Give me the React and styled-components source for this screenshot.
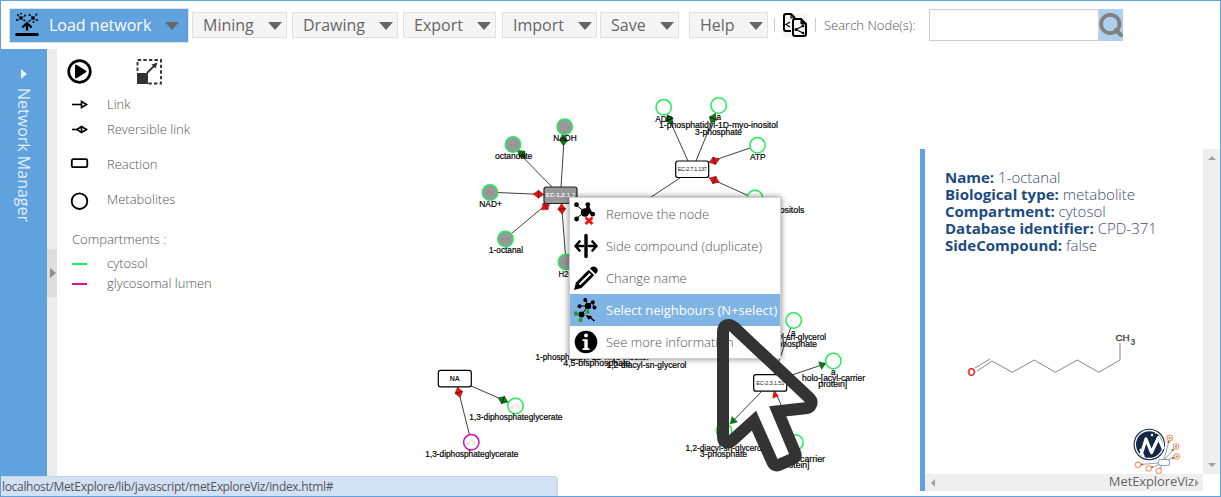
import React from "react";
import styled, { createGlobalStyle } from "styled-components";

const BLUE = "#5fa2dd";
const GREEN = "#22ec5a";
const MAGENTA = "#d40eb0";

const Global = createGlobalStyle`
  * { box-sizing: border-box; }
  html, body { margin: 0; padding: 0; background: #fff; }
  body { font-family: "Open Sans", "Noto Sans", sans-serif; overflow: hidden; }
`;

const Frame = styled.div`
  position: relative;
  width: 1221px;
  height: 497px;
  border: 1px solid ${BLUE};
  background: #fff;
  display: flex;
  flex-direction: column;
  overflow: hidden;
`;

const Toolbar = styled.div`
  display: flex;
  align-items: center;
  height: 48px;
  flex: none;
  padding-left: 8px;
`;

const ToolButton = styled.div`
  display: flex;
  align-items: center;
  justify-content: space-between;
  width: ${(p) => p.$w}px;
  height: ${(p) => (p.$primary ? 35 : 26)}px;
  margin-right: ${(p) => p.$gap}px;
  padding: 0 ${(p) => (p.$primary ? 9 : 4)}px 0 ${(p) => (p.$primary ? 5 : 10)}px;
  border: 1px solid #e1e1e1;
  background: ${(p) => (p.$primary ? BLUE : "#f5f5f5")};
  color: ${(p) => (p.$primary ? "#fff" : "#666")};
  font-size: 16px;
  line-height: 24px;
  white-space: nowrap;
`;

const ButtonText = styled.span`
  flex: 1;
  margin-left: ${(p) => p.$left || 0}px;
`;

const Caret = styled.span`
  width: 0;
  height: 0;
  margin-top: 2px;
  border: 7px solid transparent;
  border-top: 8px solid #666;
  border-bottom: 0;
`;

const Separator = styled.span`
  width: 1px;
  height: 14px;
  background: #ccc;
  margin: 0 ${(p) => p.$right}px 0 ${(p) => p.$left}px;
`;

const SearchLabel = styled.label`
  width: 105px;
  font-size: 13px;
  font-weight: 300;
  color: #555;
  white-space: nowrap;
`;

const SearchInput = styled.input`
  width: 170px;
  height: 32px;
  border: 1px solid #cfcfcf;
  outline: none;
  background: #fff;
  padding: 0 8px;
`;

const SearchButton = styled.div`
  width: 24px;
  height: 32px;
  background: #aed0ee;
  display: flex;
  align-items: center;
`;

const Body = styled.div`
  display: flex;
  flex: 1;
  min-height: 0;
`;

const SideTab = styled.div`
  width: 46px;
  background: ${BLUE};
  color: #e4effa;
  display: flex;
  flex-direction: column;
  align-items: center;
  padding-top: 20px;
`;

const SideTabArrow = styled.span`
  border: 5px solid transparent;
  border-left: 6px solid #e4effa;
  border-right: 0;
`;

const SideTabText = styled.span`
  writing-mode: vertical-rl;
  margin-top: 9px;
  font-size: 16px;
  line-height: 22px;
  white-space: nowrap;
`;

const Splitter = styled.div`
  width: 10px;
  background: #ececec;
  padding-top: 200px;
`;

const SplitHandle = styled.div`
  height: 48px;
  background: #dedede;
  display: flex;
  align-items: center;
  padding-left: 3px;
  &::before {
    content: "";
    border: 5px solid transparent;
    border-left: 6px solid #8d8d8d;
    border-right: 0;
  }
`;

const Canvas = styled.div`
  position: relative;
  flex: 1;
  display: flex;
  justify-content: space-between;
  overflow: hidden;
`;

const NetworkLayer = styled.svg`
  position: absolute;
  left: 0;
  top: 0;
`;

const Legend = styled.div`
  display: flex;
  flex-direction: column;
  width: 180px;
  padding: 8px 0 0 10px;
`;

const LegendTools = styled.div`
  display: flex;
  gap: 44px;
  height: 34px;
`;

const LegendRow = styled.div`
  display: flex;
  align-items: center;
  height: ${(p) => p.$h}px;
  margin-top: ${(p) => p.$mt || 0}px;
  color: #555;
  font-size: 13px;
  font-weight: 300;
  white-space: nowrap;
`;

const LegendIcon = styled.svg`
  width: 26px;
  height: 22px;
  margin-right: 14px;
  flex: none;
`;

const LegendTitle = styled(LegendRow)`
  padding-left: 5px;
`;

const InfoPanel = styled.div`
  position: relative;
  width: 300px;
  height: 342px;
  margin-top: 100px;
  border-left: 5px solid ${BLUE};
  background: #fff;
  display: grid;
  grid-template-columns: 278px 17px;
  grid-template-rows: 325px 17px;
`;

const InfoContent = styled.div`
  display: flex;
  flex-direction: column;
  padding: 20px 0 0 20px;
`;

const InfoLine = styled.div`
  font-size: 15px;
  line-height: 17px;
  font-weight: 300;
  color: #3f4a78;
  white-space: nowrap;
  b { color: #1d4b80; font-weight: 700; }
`;

const Drawing = styled.svg`
  display: block;
  width: 258px;
  height: 220px;
`;

const VScroll = styled.div`
  background: #efefef;
  display: flex;
  flex-direction: column;
  align-items: center;
  justify-content: space-between;
  padding: 7px 0;
`;

const HScroll = styled.div`
  background: #efefef;
  display: flex;
  align-items: center;
  padding: 0 4px 0 6px;
  color: #666;
  font-size: 13px;
  line-height: 17px;
`;

const Brand = styled.span`
  margin-left: auto;
  margin-right: 1px;
  margin-top: -3px;
  letter-spacing: -0.1px;
`;

const ScrollArrow = styled.span`
  border: 4px solid transparent;
  ${(p) => `border-${p.$base}: 4px solid #a0a0a0; border-${p.$tip}: 0;`}
`;

const Menu = styled.div`
  position: absolute;
  left: 568px;
  top: 196px;
  width: 212px;
  height: 162px;
  border: 1px solid #cfcfcf;
  background: #fff;
  box-shadow: 0 0 6px rgba(0, 0, 0, 0.5);
`;

const MenuItem = styled.div`
  height: 32px;
  display: flex;
  align-items: center;
  padding-left: 4px;
  font-size: 13px;
  font-weight: ${(p) => (p.$active ? 400 : 300)};
  color: ${(p) => (p.$active ? "#fff" : "#555")};
  background: ${(p) => (p.$active ? "#7fb4e4" : "#fff")};
  white-space: nowrap;
  svg { width: 24px; height: 24px; margin-right: 8px; flex: none; }
`;

const PointerLayer = styled.svg`
  position: absolute;
  left: 709px;
  top: 309px;
  pointer-events: none;
`;

const StatusBar = styled.div`
  position: absolute;
  left: -1px;
  bottom: -1px;
  width: 558px;
  height: 21px;
  border: 1px solid #c9d3e2;
  border-left: 0;
  border-bottom: 0;
  border-top-right-radius: 4px;
  background: #d3e1f5;
  color: #555;
  font-size: 12px;
  letter-spacing: -0.32px;
  line-height: 20px;
  padding-left: 2px;
  white-space: nowrap;
`;

const LoadIcon = () => (
  <svg width="24" height="24" viewBox="0 0 24 24" stroke="#000" fill="#000">
    <g strokeWidth="0.6">
      <path d="M3 3 6 5 10 3M6 5 2 8M6 5 9 8M14 8 18 5 21 2M18 5 15 2M18 5 22 8" fill="none" />
      {[[3, 2], [10, 2.5], [1.8, 7], [9.5, 7.5], [14.5, 2], [21.5, 1.5], [22.2, 7], [14.5, 8], [6, 0.5], [18.5, 9]].map(([x, y]) => (
        <circle key={`${x}-${y}`} cx={x} cy={y} r="1" stroke="none" />
      ))}
      <circle cx="6" cy="5" r="1.5" />
      <circle cx="18" cy="5" r="1.5" />
    </g>
    <path d="M12 17.5V11M7.3 14.5 12 10l4.7 4.5" fill="none" strokeWidth="2.3" />
    <path d="M1.7 21.5H22.3" strokeWidth="3" strokeLinecap="round" />
  </svg>
);

const CopyShareIcon = () => (
  <svg width="24" height="24" viewBox="0 0 24 24" fill="#f5f5f5" stroke="#000" strokeWidth="2">
    <rect width="24" height="24" stroke="none" />
    <path d="M8 18H3Q1 18 1 16V3Q1 1 3 1H8L12 5" />
    <path d="M8 1V5H12M7 9 3 11.5 7 14" fill="none" strokeWidth="1.2" />
    <path d="M12 6H18L23 11V21Q23 23 21 23H12Q10 23 10 21V8Q10 6 12 6Z" />
    <path d="M18 6V11H23Z" fill="#000" strokeWidth="1" />
    <path d="M20 13 13 16.5 20 20" fill="none" strokeWidth="1.1" />
    <g fill="#000" stroke="none"><circle cx="20" cy="13" r="1.3" /><circle cx="13" cy="16.5" r="1.5" /><circle cx="20" cy="20" r="1.3" /></g>
  </svg>
);

const SearchIcon = () => (
  <svg width="24" height="24" viewBox="0 0 24 24" fill="none" stroke="#808080">
    <circle cx="11.3" cy="11" r="9.2" strokeWidth="3.8" />
    <path d="M17 17 22 22" strokeWidth="4" strokeLinecap="round" />
  </svg>
);

const PlayIcon = () => (
  <svg width="25" height="27" viewBox="0 0 25 27">
    <circle cx="12.5" cy="14.5" r="10.8" fill="#fff" stroke="#000" strokeWidth="2.7" />
    <path d="M9 8.5 18.5 14.5 9 20.5Z" stroke="#000" strokeWidth="2" strokeLinejoin="round" />
  </svg>
);

const ResizeIcon = () => (
  <svg width="26" height="28" viewBox="0 0 26 28">
    <path d="M1.5 14V3H25V26.5H12" fill="none" stroke="#333" strokeWidth="1.9" strokeDasharray="3.4 2.2" />
    <path d="M1 16H12V27H1Z" fill="#333" />
    <path d="M11 16 19 8" stroke="#333" strokeWidth="1.8" />
    <path d="M15.5 7.5 21.5 5.5 19.5 11.5Z" fill="#333" />
  </svg>
);

const RemoveIcon = () => (
  <svg viewBox="0 0 24 24" stroke="#000">
    <path d="M2 3 11 10M14 2 11 10 19 12M11 10 2 16.5" />
    <g stroke="none">
      <circle cx="11" cy="10.5" r="4.2" />
      <circle cx="2.5" cy="2.7" r="2.4" /><circle cx="13.8" cy="2.6" r="2.4" />
      <circle cx="18.7" cy="12.2" r="2.4" /><circle cx="2.6" cy="17" r="2.4" />
    </g>
    <path d="M11.5 15.5 18.5 22M18.5 15.5 11.5 22" stroke="#f01515" strokeWidth="2.8" />
  </svg>
);

const SplitIcon = () => (
  <svg viewBox="0 0 24 24" fill="none" stroke="#000" strokeWidth="2.6" strokeLinecap="round" strokeLinejoin="round">
    <path d="M12 1.5V22.5" strokeWidth="3.4" />
    <path d="M9 12H1.8M5.5 7.5 1.5 12 5.5 16.5M15 12H22.2M18.5 7.5 22.5 12 18.5 16.5" />
  </svg>
);

const PencilIcon = () => (
  <svg viewBox="0 0 24 24">
    <path d="M0 24 2 16.5 14.7 3.8 20.2 9.3 7.5 22Z" />
    <path d="M16 2.5Q19-1 22.4 1.6 25.5 5 21.6 8Z" />
    <path d="M5.5 18.5 16.3 7.7" stroke="#fff" strokeWidth="2" />
  </svg>
);

const NeighboursIcon = () => (
  <svg viewBox="0 0 24 24">
    <g stroke="#000"><path d="M5 8 14 8 11 1.5M14 8 18 4 20 9M14 8 8 16" fill="none" /></g>
    <g><circle cx="14" cy="8" r="3.2" /><circle cx="5.5" cy="8.3" r="2" /><circle cx="11.3" cy="2" r="2" /><circle cx="18.8" cy="4.2" r="2" /><circle cx="20.5" cy="9.6" r="2" /><circle cx="7.5" cy="16.5" r="3" /></g>
    <g fill="#2a9b20"><circle cx="2" cy="15.5" r="2.2" /><circle cx="13.5" cy="14" r="2" /><circle cx="6.5" cy="22" r="2" /></g>
    <path d="M11.5 17 18.5 18.2 17 19.3 21 22.5 19.8 23.6 16 20.3 14.8 22Z" />
  </svg>
);

const InfoIcon = () => (
  <svg viewBox="0 0 24 24">
    <circle cx="12" cy="12" r="11.3" />
    <circle cx="12" cy="5.4" r="2" fill="#fff" />
    <path d="M8.5 9.3H13.7V18.2H15.5V20H8.5V18.2H10.3V11H8.5Z" fill="#fff" />
  </svg>
);

const MENU = [
  [RemoveIcon, "Remove the node"],
  [SplitIcon, "Side compound (duplicate)"],
  [PencilIcon, "Change name"],
  [NeighboursIcon, "Select neighbours (N+select)", true],
  [InfoIcon, "See more information"],
];

const LINKS = [
  [564.5, 132, 561, 187], [513, 147, 553, 188], [497, 192.5, 544, 194.5], [511, 234, 548, 203], [565.5, 256, 561.5, 203],
  [666, 112, 688, 161], [716, 112, 696, 161], [750, 148, 709, 162], [748, 195.5, 709, 178], [680, 178, 645, 201],
  [471, 386, 508, 402], [457.5, 387, 469.5, 435],
  [791, 327, 774, 375], [792, 375, 826, 363.5], [762, 391, 731, 423], [775, 391, 785, 414],
];

// Arrow heads: x, y of the centre, angle in degrees, colour.
const DIAMONDS = [
  [563.6, 140.5, 93, "#0a7a12"], [522, 154, 225, "#0a7a12"], [538.5, 194.3, 2, "#f01010"], [545.5, 206.5, -40, "#f01010"], [561.8, 209, 86, "#f01010"],
  [669.5, 119.5, 66, "#0a7a12"], [713, 118.5, 113, "#0a7a12"], [714.3, 160.8, -19, "#f01010"], [714.3, 180, 23, "#f01010"],
  [503, 400, 23, "#0a7a12"], [458.8, 392.5, 76, "#f01010"],
];

const NODES = [
  [564.7, 126.7, 1], [513, 144.5, 1], [490, 192.5, 1], [505.5, 239, 1], [566, 262, 1],
  [663.7, 107.3], [718.7, 105.5], [757.5, 145.3], [755, 198],
  [515.5, 406, 0, GREEN, 1], [471.3, 442.3, 0, MAGENTA, 1],
  [793.7, 320.5], [833.3, 361], [724, 431], [795.5, 442.5],
];

// Labels: text, left x, baseline y, drawn width.
const LABELS = [
  ["NADH", 553.3, 140.9, 23.5], ["octanoate", 495, 158.9, 37.3], ["NAD+", 479.3, 206.9, 22.5], ["1-octanal", 489, 253, 34], ["H2O", 558.5, 277, 16],
  ["ADP", 655.3, 122, 17], ["a", 716.5, 120, 4.5], ["1-phosphatidyl-1D-myo-inositol", 659, 128, 119], ["3-phosphate", 695, 135, 47], ["ATP", 750, 160, 15.5],
  ["1-phosphatidyl-inositols", 713, 213, 91.5],
  ["1-phosphatidyl-1D-myo-inositol", 535.5, 360, 113], ["4,5-bisphosphate", 563.3, 366, 67], ["1,2-diacyl-sn-glycerol", 606.5, 367.8, 80],
  ["1,3-diphosphateglycerate", 469.3, 420, 93], ["1,3-diphosphateglycerate", 425.3, 457, 93],
  ["a", 791, 335.5, 4.5], ["1-acyl-sn-glycerol", 762, 340.3, 64], ["3-phosphate", 770, 346.5, 47],
  ["a", 831, 375, 4.5], ["holo-[acyl-carrier", 802, 381, 63], ["protein]", 818.3, 387, 29],
  ["1,2-diacyl-sn-glycerol", 685.5, 451, 78], ["3-phosphate", 700, 456.5, 47],
  ["[acyl-carrier", 779, 462, 46], ["protein]", 781, 468, 28.5],
];

const REACTIONS = [
  [544, 187, "EC-1.2.1.3", 1, 29], [675.7, 161, "EC-2.7.1.137", 0, 29], [438.3, 370.3, "NA", 0, 10, 7], [753.7, 374.7, "EC-2.3.1.51", 0, 28],
];

const Network = () => (
  <NetworkLayer width="863" height="447" viewBox="57 49 863 447">
    <g stroke="#404040" strokeWidth="1">
      {LINKS.map(([a, b, c, d], i) => <line key={i} x1={a} y1={b} x2={c} y2={d} />)}
    </g>
    {DIAMONDS.map(([x, y, r, c], i) => (
      <g key={i} transform={`translate(${x} ${y}) rotate(${r})`}>
        <path d="M-5.5 0 0-4 5.5 0 0 4Z" fill={c} stroke="#402020" strokeWidth="0.3" />
        <path d="M0-4V4" stroke="#301010" strokeWidth="0.8" />
      </g>
    ))}
    <path d="M826 363.3 818.5 361.8 821.5 369.5Z M730 424 737.5 422 732 416.5Z" fill="#0a7a12" stroke="#143" strokeWidth="0.4" />
    <path d="M773.5 391 772.5 398.5 779 396Z M775 375 772.5 367 779 370Z" fill="#f01010" />
    {NODES.map(([x, y, sel, c, dots], i) => (
      <g key={i}>
        <circle cx={x} cy={y} r="7.7" fill={sel ? "#999" : "#fff"} stroke={c || GREEN} strokeWidth="1.5" />
        <path d={`M${x - 4} ${y + 1}l3-1.5m2 0l3 1`} stroke={dots ? "#f08080" : sel ? "#777" : "#ddd"} strokeWidth="0.8" strokeDasharray="1 1" />
        {dots && <path d={`M${x - 5} ${y + 2}h3m3 0h4m-5 -4h3`} stroke="#f4a0a0" strokeWidth="0.8" strokeDasharray="1 1" />}
      </g>
    ))}
    {REACTIONS.map(([x, y, t, sel, w, fs]) => (
      <g key={t}>
        <rect x={x} y={y} width="33" height="16.5" rx="2.3" fill={sel ? "#999" : "#fff"} stroke={sel ? "#222" : "#000"} strokeWidth="1.2" />
        <text x={x + 16.5 - w / 2} y={y + (fs ? 11 : 10)} textLength={w} fontFamily="Liberation Sans, sans-serif" fontWeight={sel || fs ? 700 : 400} fontSize={fs || 5.5} fill={sel ? "#fff" : "#222"}>{t}</text>
      </g>
    ))}
    <g fontFamily="Liberation Sans, sans-serif" fontSize="8.6" fill="#000" stroke="#000" strokeWidth="0.2">
      {LABELS.map(([t, x, y, w], i) => <text key={i} x={x} y={y} textLength={w} lengthAdjust="spacingAndGlyphs">{t}</text>)}
    </g>
  </NetworkLayer>
);

const Molecule = () => (
  <Drawing viewBox="945 254 258 220">
    <path d="M975 368 990 359M977 371 992 361 1012.3 372.3 1034.3 360 1055.3 372.3 1077.3 360 1098.7 372.3 1120 360V343" fill="none" stroke="#777" strokeWidth="0.9" />
    <g fontFamily="Liberation Sans, sans-serif" fontWeight="700">
      <text x="967.7" y="376" fontSize="10" fill="#f01515">O</text>
      <text x="1115.5" y="341" fontSize="9.8" textLength="14" fontWeight="400" fill="#444" stroke="#444" strokeWidth="0.4">CH</text>
      <text x="1130.5" y="345" fontSize="8.5" fill="#555">3</text>
    </g>
    <circle cx="1149.3" cy="444.5" r="15.2" fill="#fff" stroke="#152746" strokeWidth="1.1" />
    <circle cx="1149.3" cy="444.5" r="13.3" fill="#152746" />
    <path d="M1141 455 1146 439 1151.5 452.5 1158.5 437.5 1163.5 449" fill="none" stroke="#fff" strokeWidth="3.2" strokeLinejoin="round" />
    <path d="M1140 449 1144 457" stroke="#fff" strokeWidth="2" />
    <circle cx="1152" cy="435" r="1.2" fill="#fff" /><circle cx="1155.5" cy="433" r="0.7" fill="#fff" />
    <path d="M1164 459 1169 441M1165 459 1174 449M1167 460 1175 457M1159 463 1140 464.5M1160 464 1151 468M1163 464 1159 470" stroke="#8199b5" strokeWidth="0.9" />
    <g fill="#2a8b32"><circle cx="1168.5" cy="442" r="1.1" /><circle cx="1172.5" cy="450" r="1.1" /><circle cx="1173" cy="458" r="1.1" /></g>
    <g fill="#df2525"><circle cx="1142" cy="464.5" r="1" /><circle cx="1152" cy="467" r="1" /><circle cx="1160" cy="468.5" r="1" /></g>
    <rect x="1158.5" y="459.5" width="11" height="6" rx="2" fill="#fff" stroke="#8199b5" />
    <g fill="#fff" stroke="#f79a64" strokeWidth="1.1">
      {[[1169.7, 438], [1176, 446.5], [1176.7, 456.5], [1138, 464.8], [1148.7, 468.5], [1158.7, 471]].map(([x, y]) => <circle key={x} cx={x} cy={y} r="2.7" />)}
    </g>
    <g fill="#e46a45"><circle cx="1169.7" cy="438" r="1.1" /><circle cx="1176" cy="446.5" r="1.1" fill="#8b5fd0" /><circle cx="1176.7" cy="456.5" r="1" /></g>
  </Drawing>
);

const INFO = [
  ["Name:", "1-octanal"], ["Biological type:", "metabolite"], ["Compartment:", "cytosol"],
  ["Database identifier:", "CPD-371"], ["SideCompound:", "false"],
];

const BUTTONS = [
  ["Mining", 95, 5], ["Drawing", 106, 5], ["Export", 93, 6], ["Import", 95, 3], ["Save", 79, 10], ["Help", 79, 0],
];

export default function App() {
  return (
    <Frame>
      <Global />
      <Toolbar>
        <ToolButton $primary $w={180} $gap={3}>
          <LoadIcon />
          <ButtonText $left={10}>Load network</ButtonText>
          <Caret />
        </ToolButton>
        {BUTTONS.map(([t, w, g]) => (
          <ToolButton key={t} $w={w} $gap={g}>
            <ButtonText>{t}</ButtonText>
            <Caret />
          </ToolButton>
        ))}
        <Separator $left={6} $right={8} />
        <CopyShareIcon />
        <Separator $left={8} $right={8} />
        <SearchLabel htmlFor="node-search">Search Node(s):</SearchLabel>
        <SearchInput id="node-search" />
        <SearchButton><SearchIcon /></SearchButton>
      </Toolbar>

      <Body>
        <SideTab>
          <SideTabArrow />
          <SideTabText>Network Manager</SideTabText>
        </SideTab>
        <Splitter><SplitHandle /></Splitter>
        <Canvas>
          <Network />
          <Legend>
            <LegendTools><PlayIcon /><ResizeIcon /></LegendTools>
            <LegendRow $h={25}>
              <LegendIcon viewBox="0 0 26 22" fill="#fff" stroke="#000" strokeWidth="1.6"><path d="M5 11.5H15" /><path d="M14.5 8.5 19.5 11.5 14.5 14.5Z" /></LegendIcon>
              Link
            </LegendRow>
            <LegendRow $h={25}>
              <LegendIcon viewBox="0 0 26 22" fill="#fff" stroke="#000" strokeWidth="1.6"><path d="M5 11.5H20" /><path d="M10 11.5 14.5 8.5 19.5 11.5 14.5 14.5ZM14.5 8.5V14.5" /></LegendIcon>
              Reversible link
            </LegendRow>
            <LegendRow $h={35} $mt={5}>
              <LegendIcon viewBox="0 0 26 22" fill="#fff" stroke="#000" strokeWidth="1.8"><rect x="4.8" y="6.2" width="15.5" height="8" rx="1.5" /></LegendIcon>
              Reaction
            </LegendRow>
            <LegendRow $h={35}>
              <LegendIcon viewBox="0 0 26 22" fill="#fff" stroke="#000" strokeWidth="1.8"><circle cx="12.5" cy="13.2" r="7.8" /></LegendIcon>
              Metabolites
            </LegendRow>
            <LegendTitle $h={25} $mt={10}>Compartments :</LegendTitle>
            <LegendRow $h={20} $mt={2}>
              <LegendIcon viewBox="0 0 26 22" stroke={GREEN} strokeWidth="2"><path d="M5 12H20" /></LegendIcon>
              cytosol
            </LegendRow>
            <LegendRow $h={20}>
              <LegendIcon viewBox="0 0 26 22" stroke={MAGENTA} strokeWidth="2"><path d="M5 12H20" /></LegendIcon>
              glycosomal lumen
            </LegendRow>
          </Legend>
          <InfoPanel>
            <InfoContent>
              {INFO.map(([k, v]) => <InfoLine key={k}><b>{k}</b> {v}</InfoLine>)}
              <Molecule />
            </InfoContent>
            <VScroll>
              <ScrollArrow $base="bottom" $tip="top" />
              <ScrollArrow $base="top" $tip="bottom" />
            </VScroll>
            <HScroll>
              <ScrollArrow $base="right" $tip="left" />
              <Brand>MetExploreViz</Brand>
              <ScrollArrow $base="left" $tip="right" />
            </HScroll>
          </InfoPanel>
        </Canvas>
      </Body>

      <Menu>
        {MENU.map(([Icon, text, active]) => (
          <MenuItem key={text} $active={active}><Icon />{text}</MenuItem>
        ))}
      </Menu>

      <PointerLayer width="120" height="170" viewBox="150 30 360 510">
        <path d="M288 335 330 318 390 460 347 480Z" fill="#fff" />
        <path
          d="M189 98C189 72 208 70 222 82L447 293C461 306 454 323 436 325L353 334 405 458C410 470 405 474 396 478L356 495C346 499 340 493 337 486L282 362 218 420C204 433 189 427 189 410Z"
          fill="none" stroke="#333" strokeWidth="36" strokeLinejoin="miter"
        />
      </PointerLayer>

      <StatusBar>localhost/MetExplore/lib/javascript/metExploreViz/index.html#</StatusBar>
    </Frame>
  );
}
